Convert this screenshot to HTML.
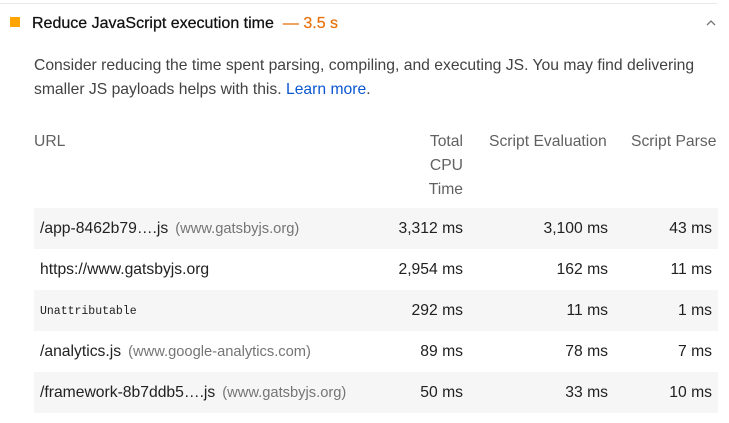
<!DOCTYPE html>
<html><head><style>
body{margin:0;background:#fff;font-family:"Liberation Sans",Arial,sans-serif;color:#212121;width:729px;height:423px;overflow:hidden;position:relative}
.top{position:absolute;left:0;top:3px;width:717px;height:1px;background:#e8e8e8}
.sq{position:absolute;left:10px;top:17px;width:10px;height:10px;background:#ffa400}
.title{position:absolute;left:32px;top:15px;font-size:16px;color:#111;white-space:nowrap;-webkit-text-stroke:0.25px #111}
.title span{color:#e8710a;margin-left:9px;-webkit-text-stroke:0.2px #e8710a}
.chev{position:absolute;left:705px;top:19px}
.desc{position:absolute;left:34px;top:54px;width:695px;font-size:15.7px;line-height:24px;color:#424242}
.desc a{color:#0b57d0;text-decoration:none}
.hdr{position:absolute;top:130px;font-size:15.7px;line-height:24px;color:#616161;white-space:nowrap}
.row{position:absolute;left:34px;width:684px;height:41px;font-size:15.7px}
.row.s{background:#f6f6f6}
.row div{position:absolute;top:12px;white-space:nowrap}
.u{left:6px}
.d{color:#757575;font-size:14.7px;margin-left:7px}
.c1{right:255px}.c2{right:110px}.c3{right:6px}
.mono{font-family:"Liberation Mono",monospace;font-size:11.5px;top:15px!important}
</style></head><body>
<div class="top"></div>
<div class="sq"></div>
<div class="title">Reduce JavaScript execution time<span>— 3.5 s</span></div>
<svg class="chev" width="12" height="8" viewBox="0 0 12 8"><path d="M2 6L6 2L10 6" stroke="#757575" stroke-width="1.3" fill="none"/></svg>
<div class="desc">Consider reducing the time spent parsing, compiling, and executing JS. You may find delivering smaller JS payloads helps with this. <a>Learn more</a>.</div>
<div class="hdr" style="left:413px;width:50px;text-align:right">Total<br>CPU<br>Time</div>
<div class="hdr" style="left:34px">URL</div>
<div class="hdr" style="left:489px">Script Evaluation</div>
<div class="hdr" style="left:631px">Script Parse</div>
<div class="row s" style="top:208px"><div class="u">/app-8462b79….js<span class="d">(www.gatsbyjs.org)</span></div><div class="c1">3,312 ms</div><div class="c2">3,100 ms</div><div class="c3">43 ms</div></div>
<div class="row" style="top:249px"><div class="u">https://www.gatsbyjs.org</div><div class="c1">2,954 ms</div><div class="c2">162 ms</div><div class="c3">11 ms</div></div>
<div class="row s" style="top:290px"><div class="u mono">Unattributable</div><div class="c1">292 ms</div><div class="c2">11 ms</div><div class="c3">1 ms</div></div>
<div class="row" style="top:331px"><div class="u">/analytics.js<span class="d">(www.google-analytics.com)</span></div><div class="c1">89 ms</div><div class="c2">78 ms</div><div class="c3">7 ms</div></div>
<div class="row s" style="top:372px"><div class="u">/framework-8b7ddb5….js<span class="d">(www.gatsbyjs.org)</span></div><div class="c1">50 ms</div><div class="c2">33 ms</div><div class="c3">10 ms</div></div>
</body></html>
